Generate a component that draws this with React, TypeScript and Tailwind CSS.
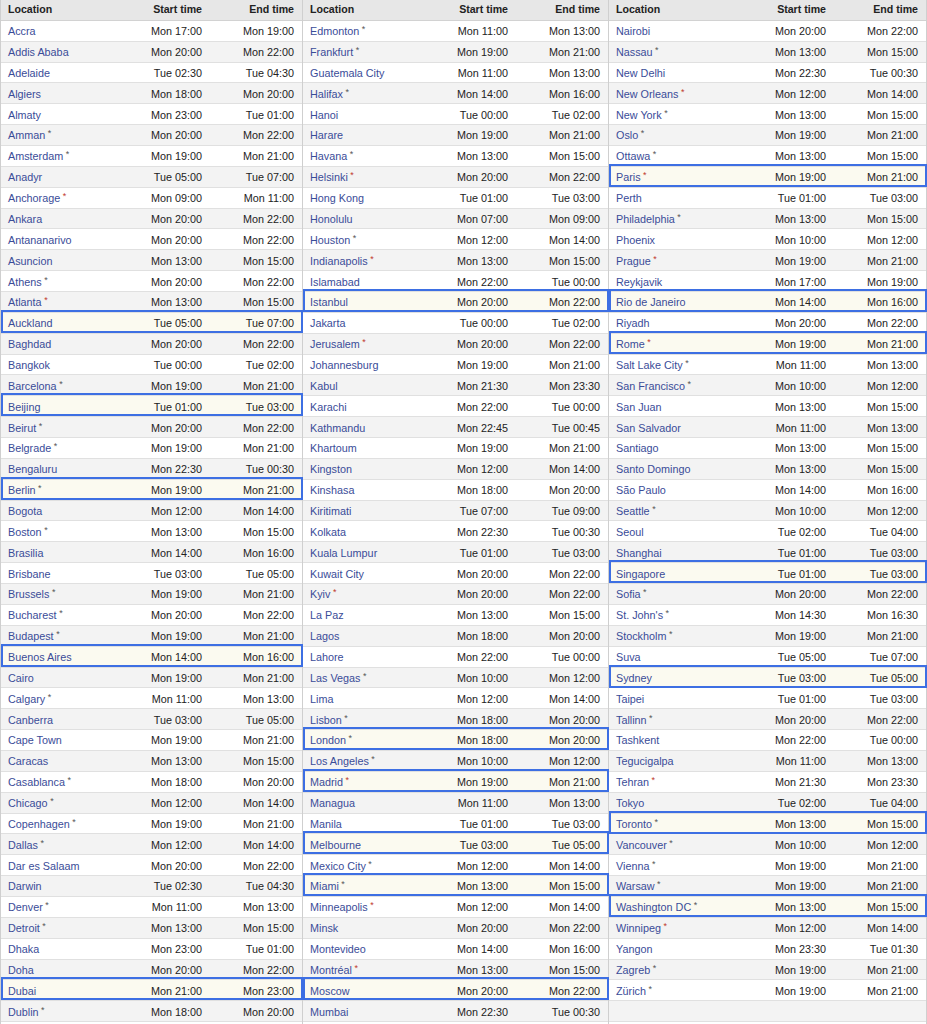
import React from "react";

type Row = [string, string, string, number?];

const col1: Row[] = [
  ["Accra", "Mon 17:00", "Mon 19:00"],
  ["Addis Ababa", "Mon 20:00", "Mon 22:00"],
  ["Adelaide", "Tue 02:30", "Tue 04:30"],
  ["Algiers", "Mon 18:00", "Mon 20:00"],
  ["Almaty", "Mon 23:00", "Tue 01:00"],
  ["Amman", "Mon 20:00", "Mon 22:00", 1],
  ["Amsterdam", "Mon 19:00", "Mon 21:00", 1],
  ["Anadyr", "Tue 05:00", "Tue 07:00"],
  ["Anchorage", "Mon 09:00", "Mon 11:00", 2],
  ["Ankara", "Mon 20:00", "Mon 22:00"],
  ["Antananarivo", "Mon 20:00", "Mon 22:00"],
  ["Asuncion", "Mon 13:00", "Mon 15:00"],
  ["Athens", "Mon 20:00", "Mon 22:00", 1],
  ["Atlanta", "Mon 13:00", "Mon 15:00", 2],
  ["Auckland", "Tue 05:00", "Tue 07:00"],
  ["Baghdad", "Mon 20:00", "Mon 22:00"],
  ["Bangkok", "Tue 00:00", "Tue 02:00"],
  ["Barcelona", "Mon 19:00", "Mon 21:00", 1],
  ["Beijing", "Tue 01:00", "Tue 03:00"],
  ["Beirut", "Mon 20:00", "Mon 22:00", 1],
  ["Belgrade", "Mon 19:00", "Mon 21:00", 1],
  ["Bengaluru", "Mon 22:30", "Tue 00:30"],
  ["Berlin", "Mon 19:00", "Mon 21:00", 1],
  ["Bogota", "Mon 12:00", "Mon 14:00"],
  ["Boston", "Mon 13:00", "Mon 15:00", 1],
  ["Brasilia", "Mon 14:00", "Mon 16:00"],
  ["Brisbane", "Tue 03:00", "Tue 05:00"],
  ["Brussels", "Mon 19:00", "Mon 21:00", 1],
  ["Bucharest", "Mon 20:00", "Mon 22:00", 1],
  ["Budapest", "Mon 19:00", "Mon 21:00", 1],
  ["Buenos Aires", "Mon 14:00", "Mon 16:00"],
  ["Cairo", "Mon 19:00", "Mon 21:00"],
  ["Calgary", "Mon 11:00", "Mon 13:00", 1],
  ["Canberra", "Tue 03:00", "Tue 05:00"],
  ["Cape Town", "Mon 19:00", "Mon 21:00"],
  ["Caracas", "Mon 13:00", "Mon 15:00"],
  ["Casablanca", "Mon 18:00", "Mon 20:00", 1],
  ["Chicago", "Mon 12:00", "Mon 14:00", 1],
  ["Copenhagen", "Mon 19:00", "Mon 21:00", 1],
  ["Dallas", "Mon 12:00", "Mon 14:00", 1],
  ["Dar es Salaam", "Mon 20:00", "Mon 22:00"],
  ["Darwin", "Tue 02:30", "Tue 04:30"],
  ["Denver", "Mon 11:00", "Mon 13:00", 1],
  ["Detroit", "Mon 13:00", "Mon 15:00", 1],
  ["Dhaka", "Mon 23:00", "Tue 01:00"],
  ["Doha", "Mon 20:00", "Mon 22:00"],
  ["Dubai", "Mon 21:00", "Mon 23:00"],
  ["Dublin", "Mon 18:00", "Mon 20:00", 1],
];

const col2: Row[] = [
  ["Edmonton", "Mon 11:00", "Mon 13:00", 1],
  ["Frankfurt", "Mon 19:00", "Mon 21:00", 1],
  ["Guatemala City", "Mon 11:00", "Mon 13:00"],
  ["Halifax", "Mon 14:00", "Mon 16:00", 1],
  ["Hanoi", "Tue 00:00", "Tue 02:00"],
  ["Harare", "Mon 19:00", "Mon 21:00"],
  ["Havana", "Mon 13:00", "Mon 15:00", 1],
  ["Helsinki", "Mon 20:00", "Mon 22:00", 2],
  ["Hong Kong", "Tue 01:00", "Tue 03:00"],
  ["Honolulu", "Mon 07:00", "Mon 09:00"],
  ["Houston", "Mon 12:00", "Mon 14:00", 1],
  ["Indianapolis", "Mon 13:00", "Mon 15:00", 2],
  ["Islamabad", "Mon 22:00", "Tue 00:00"],
  ["Istanbul", "Mon 20:00", "Mon 22:00"],
  ["Jakarta", "Tue 00:00", "Tue 02:00"],
  ["Jerusalem", "Mon 20:00", "Mon 22:00", 2],
  ["Johannesburg", "Mon 19:00", "Mon 21:00"],
  ["Kabul", "Mon 21:30", "Mon 23:30"],
  ["Karachi", "Mon 22:00", "Tue 00:00"],
  ["Kathmandu", "Mon 22:45", "Tue 00:45"],
  ["Khartoum", "Mon 19:00", "Mon 21:00"],
  ["Kingston", "Mon 12:00", "Mon 14:00"],
  ["Kinshasa", "Mon 18:00", "Mon 20:00"],
  ["Kiritimati", "Tue 07:00", "Tue 09:00"],
  ["Kolkata", "Mon 22:30", "Tue 00:30"],
  ["Kuala Lumpur", "Tue 01:00", "Tue 03:00"],
  ["Kuwait City", "Mon 20:00", "Mon 22:00"],
  ["Kyiv", "Mon 20:00", "Mon 22:00", 2],
  ["La Paz", "Mon 13:00", "Mon 15:00"],
  ["Lagos", "Mon 18:00", "Mon 20:00"],
  ["Lahore", "Mon 22:00", "Tue 00:00"],
  ["Las Vegas", "Mon 10:00", "Mon 12:00", 1],
  ["Lima", "Mon 12:00", "Mon 14:00"],
  ["Lisbon", "Mon 18:00", "Mon 20:00", 1],
  ["London", "Mon 18:00", "Mon 20:00", 1],
  ["Los Angeles", "Mon 10:00", "Mon 12:00", 1],
  ["Madrid", "Mon 19:00", "Mon 21:00", 2],
  ["Managua", "Mon 11:00", "Mon 13:00"],
  ["Manila", "Tue 01:00", "Tue 03:00"],
  ["Melbourne", "Tue 03:00", "Tue 05:00"],
  ["Mexico City", "Mon 12:00", "Mon 14:00", 1],
  ["Miami", "Mon 13:00", "Mon 15:00", 1],
  ["Minneapolis", "Mon 12:00", "Mon 14:00", 2],
  ["Minsk", "Mon 20:00", "Mon 22:00"],
  ["Montevideo", "Mon 14:00", "Mon 16:00"],
  ["Montréal", "Mon 13:00", "Mon 15:00", 2],
  ["Moscow", "Mon 20:00", "Mon 22:00"],
  ["Mumbai", "Mon 22:30", "Tue 00:30"],
];

const col3: Row[] = [
  ["Nairobi", "Mon 20:00", "Mon 22:00"],
  ["Nassau", "Mon 13:00", "Mon 15:00", 1],
  ["New Delhi", "Mon 22:30", "Tue 00:30"],
  ["New Orleans", "Mon 12:00", "Mon 14:00", 2],
  ["New York", "Mon 13:00", "Mon 15:00", 1],
  ["Oslo", "Mon 19:00", "Mon 21:00", 1],
  ["Ottawa", "Mon 13:00", "Mon 15:00", 1],
  ["Paris", "Mon 19:00", "Mon 21:00", 2],
  ["Perth", "Tue 01:00", "Tue 03:00"],
  ["Philadelphia", "Mon 13:00", "Mon 15:00", 1],
  ["Phoenix", "Mon 10:00", "Mon 12:00"],
  ["Prague", "Mon 19:00", "Mon 21:00", 2],
  ["Reykjavik", "Mon 17:00", "Mon 19:00"],
  ["Rio de Janeiro", "Mon 14:00", "Mon 16:00"],
  ["Riyadh", "Mon 20:00", "Mon 22:00"],
  ["Rome", "Mon 19:00", "Mon 21:00", 2],
  ["Salt Lake City", "Mon 11:00", "Mon 13:00", 1],
  ["San Francisco", "Mon 10:00", "Mon 12:00", 1],
  ["San Juan", "Mon 13:00", "Mon 15:00"],
  ["San Salvador", "Mon 11:00", "Mon 13:00"],
  ["Santiago", "Mon 13:00", "Mon 15:00"],
  ["Santo Domingo", "Mon 13:00", "Mon 15:00"],
  ["São Paulo", "Mon 14:00", "Mon 16:00"],
  ["Seattle", "Mon 10:00", "Mon 12:00", 1],
  ["Seoul", "Tue 02:00", "Tue 04:00"],
  ["Shanghai", "Tue 01:00", "Tue 03:00"],
  ["Singapore", "Tue 01:00", "Tue 03:00"],
  ["Sofia", "Mon 20:00", "Mon 22:00", 1],
  ["St. John's", "Mon 14:30", "Mon 16:30", 1],
  ["Stockholm", "Mon 19:00", "Mon 21:00", 1],
  ["Suva", "Tue 05:00", "Tue 07:00"],
  ["Sydney", "Tue 03:00", "Tue 05:00"],
  ["Taipei", "Tue 01:00", "Tue 03:00"],
  ["Tallinn", "Mon 20:00", "Mon 22:00", 1],
  ["Tashkent", "Mon 22:00", "Tue 00:00"],
  ["Tegucigalpa", "Mon 11:00", "Mon 13:00"],
  ["Tehran", "Mon 21:30", "Mon 23:30", 2],
  ["Tokyo", "Tue 02:00", "Tue 04:00"],
  ["Toronto", "Mon 13:00", "Mon 15:00", 1],
  ["Vancouver", "Mon 10:00", "Mon 12:00", 1],
  ["Vienna", "Mon 19:00", "Mon 21:00", 1],
  ["Warsaw", "Mon 19:00", "Mon 21:00", 1],
  ["Washington DC", "Mon 13:00", "Mon 15:00", 1],
  ["Winnipeg", "Mon 12:00", "Mon 14:00", 2],
  ["Yangon", "Mon 23:30", "Tue 01:30"],
  ["Zagreb", "Mon 19:00", "Mon 21:00", 1],
  ["Zürich", "Mon 19:00", "Mon 21:00", 1],
  ["", "", ""],
];

const highlighted = new Set([
  "Auckland", "Beijing", "Berlin", "Buenos Aires", "Dubai",
  "Istanbul", "London", "Madrid", "Melbourne", "Miami", "Moscow",
  "Paris", "Rio de Janeiro", "Rome", "Singapore", "Sydney", "Toronto", "Washington DC",
]);

function Table({ rows, width }: { rows: Row[]; width: string }) {
  return (
    <div className={`${width} shrink-0 border-r border-[#cfcfcf]`}>
      <div className="flex h-[20.86px] items-center bg-[#e7e7e7] border-b border-[#d2d2d2] font-bold text-[#222] text-[10.6px]">
        <div className="flex-1 pl-[7px]">Location</div>
        <div className="w-[92px] pr-2 text-right">Start time</div>
        <div className="w-[92px] pr-2 text-right">End time</div>
      </div>
      {rows.map((r, i) => {
        const hl = highlighted.has(r[0]);
        const bg = hl ? "bg-[#fbfaf0]" : i % 2 === 0 ? "bg-white" : "bg-[#f3f3f3]";
        return (
          <div
            key={i}
            className={`relative flex h-[20.86px] items-center border-b border-[#e0e0e0] text-[10.8px] ${bg}`}
          >
            <div className="flex-1 pl-[7px] pt-[1px] text-[#3a4c98] whitespace-nowrap">
              {r[0]}
              {r[3] === 1 && <span className="text-[#555] text-[9px] align-top"> *</span>}
              {r[3] === 2 && <span className="text-[#c0392b] text-[9px] align-top"> *</span>}
            </div>
            <div className="w-[92px] pr-2 pt-[1px] text-right text-[#222]">{r[1]}</div>
            <div className="w-[92px] pr-2 pt-[1px] text-right text-[#222]">{r[2]}</div>
            {hl && (
              <div className="pointer-events-none absolute left-0 right-[-1px] top-[-3px] h-[23px] border-2 border-[#3d6fe3]" />
            )}
          </div>
        );
      })}
    </div>
  );
}

export default function App() {
  return (
    <div
      className="flex w-[927px] h-[1024px] overflow-hidden bg-white"
      style={{ fontFamily: '"Liberation Sans", Arial, sans-serif' }}
    >
      <Table rows={col1} width="w-[303px] border-l" />
      <Table rows={col2} width="w-[306px]" />
      <Table rows={col3} width="w-[318px]" />
    </div>
  );
}
